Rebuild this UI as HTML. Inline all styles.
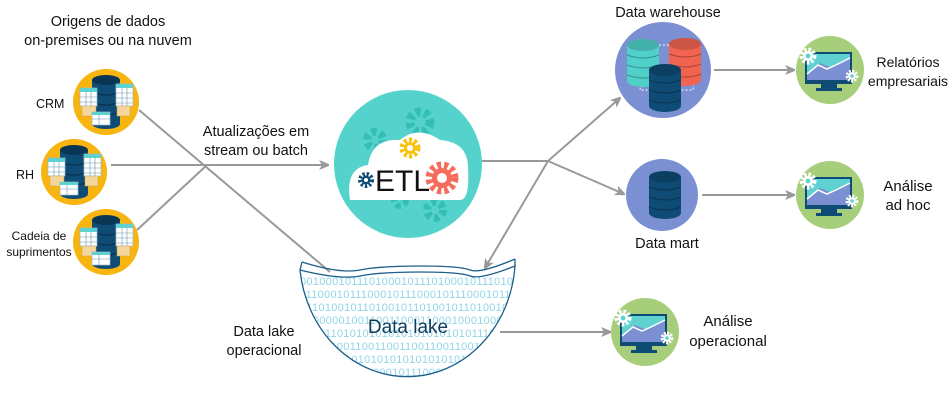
<!DOCTYPE html>
<html><head><meta charset="utf-8"><style>
html,body{margin:0;padding:0;background:#fff;width:950px;height:400px;overflow:hidden}
svg{display:block}
text{font-family:"Liberation Sans","DejaVu Sans",sans-serif;fill:#111}
</style></head><body>
<svg width="950" height="400" viewBox="0 0 950 400" xmlns="http://www.w3.org/2000/svg">
<defs>
<marker id="ar" markerWidth="10" markerHeight="10" refX="9" refY="5" orient="auto" markerUnits="userSpaceOnUse">
<path d="M0,0 L12,5 L0,10 L3,5 Z" fill="#999"/></marker>
<g id="src">
<circle r="33" fill="#F8B40F"/>
<rect x="-14" y="-22" width="28" height="44" fill="#0F4C75"/>
<ellipse cx="0" cy="-22" rx="14" ry="5" fill="#0A3656"/>
<ellipse cx="0" cy="22" rx="14" ry="5" fill="#0F4C75"/>
<path d="M-14,-10 q14,6 28,0 M-14,0 q14,6 28,0 M-14,10 q14,6 28,0" stroke="#0A3656" stroke-width="1.5" fill="none"/>
<rect x="-26" y="-14" width="17" height="18" fill="#fff" stroke="#9bc" stroke-width="0.7"/><rect x="-26" y="-14" width="17" height="4" fill="#5ED1D0"/>
<path d="M-26,-5h17M-26,0h17M-20,-10v14M-15,-10v14" stroke="#6a95b0" stroke-width="0.6"/>
<rect x="-24" y="4" width="14" height="10" fill="#F5D69A" stroke="#c9a860" stroke-width="0.5"/>
<rect x="10" y="-18" width="17" height="22" fill="#fff" stroke="#9bc" stroke-width="0.7"/><rect x="10" y="-18" width="17" height="4" fill="#5ED1D0"/>
<path d="M10,-9h17M10,-4h17M10,1h17M16,-14v18M21,-14v18" stroke="#6a95b0" stroke-width="0.6"/>
<rect x="11" y="4" width="13" height="10" fill="#F5D69A" stroke="#c9a860" stroke-width="0.5"/>
<rect x="-14" y="10" width="18" height="13" fill="#fff" stroke="#9bc" stroke-width="0.7"/><rect x="-14" y="10" width="18" height="3" fill="#5ED1D0"/>
<path d="M-14,17h18M-7,13v10" stroke="#6a95b0" stroke-width="0.6"/>
</g>
<g id="gear">
<circle r="6.5" fill="none" stroke="#fff" stroke-width="4" stroke-dasharray="2.6 1.8"/>
<circle r="5" fill="#fff"/><circle r="2.4" fill="#5ED1D0"/>
</g>
<g id="mon">
<circle r="34" fill="#A7CF7B"/>
<rect x="-24" y="-17" width="45" height="30" fill="#7B8FD3" stroke="#0F4C75" stroke-width="2"/>
<path d="M-23,-16 H20 V-12 L8,-6 L0,-3 L-10,-7 L-23,3 Z" fill="#5ED1D0"/>
<path d="M-23,4 L-12,-5 L-3,-1 L8,-6 L20,-12" stroke="#fff" stroke-width="1.5" fill="none"/>
<rect x="-24" y="10" width="45" height="4" fill="#0F4C75"/>
<rect x="-9" y="14" width="16" height="4" fill="#0F4C75"/>
<rect x="-14" y="18" width="26" height="3" fill="#0F4C75"/>
<use href="#gear" x="-22" y="-14"/>
<g transform="translate(22,6) scale(0.75)"><use href="#gear"/></g>
</g>
<g id="cyl">
<rect x="-16" y="-18" width="32" height="36" fill="currentColor"/>
<ellipse cy="-18" rx="16" ry="6" fill="currentColor"/>
<ellipse cy="-18" rx="16" ry="6" fill="#000" opacity="0.15"/>
<ellipse cy="18" rx="16" ry="6" fill="currentColor"/>
<path d="M-16,-8 q16,6 32,0 M-16,2 q16,6 32,0 M-16,12 q16,6 32,0" stroke="#000" stroke-opacity="0.3" stroke-width="1" fill="none"/>
</g>
<clipPath id="bowl"><path d="M300,270 Q340,280 360,276 T420,272 T470,276 T515,266 A108,120 0 0 1 300,270 Z"/></clipPath>
</defs>

<g stroke="#999" stroke-width="2" fill="none">
<line x1="139" y1="110" x2="330" y2="272"/>
<line x1="111" y1="165" x2="328" y2="165" marker-end="url(#ar)"/>
<line x1="137" y1="230" x2="207" y2="165"/>
<polyline points="482,161 548,161"/>
<line x1="548" y1="161" x2="620" y2="98" marker-end="url(#ar)"/>
<line x1="548" y1="161" x2="624" y2="194" marker-end="url(#ar)"/>
<line x1="548" y1="161" x2="485" y2="268" marker-end="url(#ar)"/>
<line x1="714" y1="70" x2="794" y2="70" marker-end="url(#ar)"/>
<line x1="702" y1="195" x2="794" y2="195" marker-end="url(#ar)"/>
<line x1="500" y1="332" x2="610" y2="332" marker-end="url(#ar)"/>
</g>

<use href="#src" x="106" y="102"/>
<use href="#src" x="74" y="172"/>
<use href="#src" x="106" y="242"/>
<text x="108" y="26" font-size="14.5" text-anchor="middle">Origens de dados</text>
<text x="108" y="45" font-size="14.5" text-anchor="middle">on-premises ou na nuvem</text>
<text x="36" y="108" font-size="12.5">CRM</text>
<text x="16" y="179" font-size="12.5">RH</text>
<text x="39" y="240" font-size="12" text-anchor="middle">Cadeia de</text>
<text x="39" y="256" font-size="12" text-anchor="middle">suprimentos</text>
<text x="256" y="136" font-size="14.5" text-anchor="middle">Atualizações em</text>
<text x="256" y="155" font-size="14.5" text-anchor="middle">stream ou batch</text>

<circle cx="408" cy="164" r="74" fill="#56D2CC"/>
<g fill="none" stroke="#33BFB8" stroke-dasharray="5 3.5">
<circle cx="420" cy="122" r="10" stroke-width="9"/><circle cx="375" cy="140" r="8" stroke-width="8"/><circle cx="435" cy="210" r="8" stroke-width="8"/><circle cx="400" cy="200" r="6" stroke-width="6"/>
</g>
<path d="M350,200 Q345,168 368,165 Q372,138 400,140 Q418,125 440,140 Q468,142 468,168 Q470,200 460,200 Z" fill="#fff"/>
<g transform="translate(410,148)"><circle r="8" fill="none" stroke="#F8C20F" stroke-width="5" stroke-dasharray="3 2.2"/><circle r="6" fill="#F8C20F"/><circle r="3" fill="#fff"/></g>
<g transform="translate(442,178)"><circle r="13" fill="none" stroke="#F56C5C" stroke-width="7" stroke-dasharray="4 3"/><circle r="10" fill="#F56C5C"/><circle r="5" fill="#fff"/></g>
<g transform="translate(366,180)"><circle r="6" fill="none" stroke="#0F4C75" stroke-width="4" stroke-dasharray="2.3 1.8"/><circle r="4.5" fill="#0F4C75"/><circle r="2" fill="#fff"/></g>
<text x="375" y="191" font-size="30" style="fill:#111">ETL</text>

<circle cx="663" cy="70" r="48" fill="#7B8FD3"/>
<path d="M643,45 L700,45 L693,90 L640,90 Z" stroke="#fff" stroke-dasharray="2 2" fill="none"/>
<use href="#cyl" x="643" y="63" style="color:#4FD0C8"/>
<use href="#cyl" x="685" y="62" style="color:#F06450"/>
<use href="#cyl" x="665" y="88" style="color:#0F4C75"/>
<text x="668" y="17" font-size="14.5" text-anchor="middle">Data warehouse</text>

<circle cx="662" cy="195" r="36" fill="#7B8FD3"/>
<use href="#cyl" x="665" y="195" style="color:#0F4C75"/>
<text x="667" y="248" font-size="14.5" text-anchor="middle">Data mart</text>

<use href="#mon" x="830" y="70"/>
<use href="#mon" x="830" y="195"/>
<use href="#mon" x="645" y="332"/>
<text x="908" y="67" font-size="14" text-anchor="middle">Relatórios</text>
<text x="908" y="86" font-size="14" text-anchor="middle">empresariais</text>
<text x="908" y="191" font-size="15" text-anchor="middle">Análise</text>
<text x="908" y="210" font-size="15" text-anchor="middle">ad hoc</text>
<text x="728" y="326" font-size="15" text-anchor="middle">Análise</text>
<text x="728" y="346" font-size="15" text-anchor="middle">operacional</text>

<g clip-path="url(#bowl)">
<rect x="295" y="260" width="230" height="140" fill="#fff"/>
<g font-size="11" font-family="Liberation Mono,monospace" letter-spacing="0.3">
<text x="300" y="285" style="fill:#8FD6E8">0010001011101000101110100010111010</text>
<text x="300" y="298" style="fill:#8FD6E8">1110001011100010111000101110001011</text>
<text x="300" y="311" style="fill:#8FD6E8">0110100101101001011010010110100101</text>
<text x="300" y="324" style="fill:#8FD6E8">1000000100110011000110001000100000</text>
<text x="300" y="337" style="fill:#8FD6E8">0101110101010101010101010101110101</text>
<text x="300" y="350" style="fill:#8FD6E8">1100110011001100110011001100110011</text>
<text x="300" y="363" style="fill:#8FD6E8">0101010101010101010101010101010101</text>
<text x="300" y="376" style="fill:#8FD6E8">1111000101110001011100010111000101</text>
<text x="300" y="389" style="fill:#8FD6E8">0110100101101001011010010110100101</text>
</g>
</g>
<path d="M300,270 Q340,280 360,276 T420,272 T470,276 T515,266 A108,120 0 0 1 300,270 Z" fill="none" stroke="#1B5E8A" stroke-width="1.3"/>
<path d="M302,262 Q340,274 360,270 T420,266 T470,270 T515,259" fill="none" stroke="#1B5E8A" stroke-width="1.3"/>
<path d="M302,262 L300,270 M515,259 L515,266" stroke="#1B5E8A" stroke-width="1.3"/>
<text x="408" y="333" font-size="19" text-anchor="middle" style="fill:#0F3B5A">Data lake</text>
<text x="264" y="336" font-size="14.5" text-anchor="middle">Data lake</text>
<text x="264" y="355" font-size="14.5" text-anchor="middle">operacional</text>
</svg>
</body></html>
